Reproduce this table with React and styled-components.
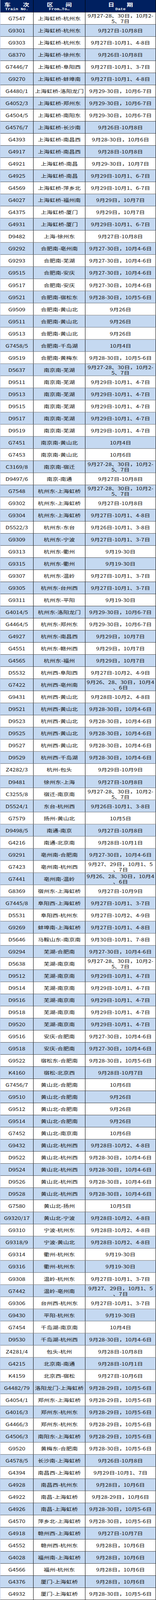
import { useEffect, useState } from "react";
import styled, { createGlobalStyle } from "styled-components";

const PAGE_HEIGHT = 5281;

const A = "9月27-28、30日，10月2-\n5、7日";
const B = "9月26、28、30日，10月4\n、6日";
const C = "9月27、29日，10月1、5\n、7日";

const trains = [
  ["G7547", "上海虹桥-杭州东", A],
  ["G9301", "上海虹桥-杭州东", "9月27日-10月8日"],
  ["G9303", "上海虹桥-杭州东", "9月27日-10月1、4-8日"],
  ["G8370", "上海虹桥-徐州东", "9月26日-10月8日"],
  ["G7446/7", "上海虹桥-阜阳西", "9月27日-10月1、3-7日"],
  ["G9270", "上海虹桥-蚌埠南", "9月27日-10月1、4-8日"],
  ["G4480/1", "上海虹桥-洛阳龙门", "9月29-30日，10月6-7日"],
  ["G4052/3", "上海虹桥-郑州东", "9月29-30日，10月6-7日"],
  ["G4504/5", "上海虹桥-南阳东", "9月29-30日，10月6-7日"],
  ["G4576/7", "上海虹桥-长沙南", "9月26日-10月8日"],
  ["G4393", "上海虹桥-南昌西", "9月28-30日，10月6日"],
  ["G4917", "上海虹桥-南昌西", "9月28日-10月8日"],
  ["G4921", "上海虹桥-南昌", "9月29-30日，10月7日"],
  ["G4925", "上海虹桥-南昌", "9月29日-10月1、6-7日"],
  ["G4569", "上海虹桥-萍乡北", "9月29日-10月1、6-7日"],
  ["G4027", "上海虹桥-福州南", "9月29日，10月7日"],
  ["G4375", "上海虹桥-厦门", "9月29日，10月7日"],
  ["G4931", "上海虹桥-厦门", "9月29日-10月1、6-7日"],
  ["D9482", "上海-徐州东", "9月27日-10月8日"],
  ["G9292", "合肥南-亳州南", "9月27-30日，10月4-6日"],
  ["G9293", "合肥南-芜湖", "9月27-30日，10月4-6日"],
  ["G9515", "合肥南-安庆", "9月27-30日，10月4-6日"],
  ["G9517", "合肥南-安庆", "9月27-30日，10月4-6日"],
  ["G9521", "合肥南-宿松东", "9月28-30日，10月5-6日"],
  ["G9509", "合肥南-黄山北", "9月26日"],
  ["G9511", "合肥南-黄山北", "9月26日"],
  ["G9513", "合肥南-黄山北", "9月26日"],
  ["G7458/5", "合肥南-千岛湖", "10月4日"],
  ["G9519", "合肥南-黄梅东", "9月28-30日，10月5-6日"],
  ["D5637", "南京南-芜湖", A],
  ["D9511", "南京南-芜湖", "9月29日-10月1、4-7日"],
  ["D9513", "南京南-芜湖", "9月29日-10月1、4-7日"],
  ["D9515", "南京南-芜湖", "9月29日-10月1、4-7日"],
  ["D9517", "南京南-芜湖", "9月29日-10月1、4-7日"],
  ["D9519", "南京南-芜湖", "9月29日-10月1、4-7日"],
  ["G7451", "南京南-黄山北", "10月4日"],
  ["G7453", "南京南-黄山北", "10月6日"],
  ["C3169/8", "南京南-宿迁", A],
  ["D9497/6", "南京-南通", "9月27日-10月8日"],
  ["G7548", "杭州东-上海虹桥", A],
  ["G9302", "杭州东-上海虹桥", "9月27日-10月8日"],
  ["G9304", "杭州东-上海虹桥", "9月27日-10月1、4-8日"],
  ["D5522/3", "杭州东-东台", "9月26日-10月1、3-8日"],
  ["G9309", "杭州东-宁波", "9月27日-10月1、3-7日"],
  ["G9313", "杭州东-衢州", "9月19-30日"],
  ["G9315", "杭州东-衢州", "9月19-30日"],
  ["G9307", "杭州东-温岭", "9月27日-10月1、3-7日"],
  ["G9305", "杭州东-台州西", "9月27日-10月1、3-7日"],
  ["G9311", "杭州东-平阳", "9月19-30日"],
  ["G4014/5", "杭州东-洛阳龙门", "9月29-30日，10月6-7日"],
  ["G4464/5", "杭州东-郑州东", "9月29-30日，10月6-7日"],
  ["G4927", "杭州东-南昌西", "9月29日，10月7日"],
  ["G4551", "杭州东-赣州西", "9月29日，10月7日"],
  ["G4565", "杭州东-福州", "9月29日，10月7日"],
  ["D5532", "杭州西-阜阳西", "9月27日-10月2、4-9日"],
  ["G7422", "杭州西-亳州南", B],
  ["G9431", "杭州西-黄山北", "9月28日-10月2、4-8日"],
  ["D9521", "杭州西-黄山北", "9月28-30日，10月4-6日"],
  ["D9523", "杭州西-黄山北", "9月28-30日，10月4-6日"],
  ["D9525", "杭州西-黄山北", "9月28-30日，10月4-6日"],
  ["D9527", "杭州西-黄山北", "9月28-30日，10月4-6日"],
  ["D9529", "杭州西-千岛湖", "9月28-30日，10月4-6日"],
  ["Z4282/3", "杭州-包头", "9月29日-10月9日"],
  ["D9481", "徐州东-上海", "9月27日-10月8日"],
  ["C3255/8", "宿迁-南京南", A],
  ["D5524/1", "东台-杭州西", "9月26日-10月1、3-8日"],
  ["G7579", "扬州-黄山北", "10月5日"],
  ["D9498/5", "南通-南京", "9月27日-10月8日"],
  ["G4216", "南通-北京南", "9月28日-10月1日"],
  ["G9291", "亳州南-合肥南", "9月27-30日，10月4-6日"],
  ["G7423", "亳州南-杭州西", C],
  ["G7441", "亳州南-温岭", B],
  ["G8369", "宿州东-上海虹桥", "9月27日-10月9日"],
  ["G7445/8", "阜阳西-上海虹桥", "9月27日-10月1、3-7日"],
  ["D5531", "阜阳西-杭州东", "9月27日-10月2、4-9日"],
  ["G9269", "蚌埠南-上海虹桥", "9月27日-10月1、4-8日"],
  ["D5646", "马鞍山东-南京南", "9月30日-10月1、7-8日"],
  ["G9294", "芜湖-合肥南", "9月27-30日，10月4-6日"],
  ["D5638", "芜湖-南京南", A],
  ["D9512", "芜湖-南京南", "9月29日-10月1、4-7日"],
  ["D9514", "芜湖-南京南", "9月29日-10月1、4-7日"],
  ["D9516", "芜湖-南京南", "9月29日-10月1、4-7日"],
  ["D9518", "芜湖-南京南", "9月29日-10月1、4-7日"],
  ["D9520", "芜湖-南京南", "9月29日-10月1、4-7日"],
  ["G9516", "安庆-合肥南", "9月27-30日，10月4-6日"],
  ["G9518", "安庆-合肥南", "9月27-30日，10月4-6日"],
  ["G9522", "宿松东-合肥南", "9月28-30日，10月5-6日"],
  ["K4160", "宿松-北京西", "9月28日-10月7日"],
  ["G7456/7", "黄山北-合肥南", "10月6日"],
  ["G9510", "黄山北-合肥南", "9月26日"],
  ["G9512", "黄山北-合肥南", "9月26日"],
  ["G9514", "黄山北-合肥南", "9月26日"],
  ["G7452", "黄山北-南京南", "10月6日"],
  ["G9432", "黄山北-杭州西", "9月28日-10月2、4-8日"],
  ["D9522", "黄山北-杭州西", "9月28-30日，10月4-6日"],
  ["D9524", "黄山北-杭州西", "9月28-30日，10月4-6日"],
  ["D9526", "黄山北-杭州西", "9月28-30日，10月4-6日"],
  ["D9528", "黄山北-杭州西", "9月28-30日，10月4-6日"],
  ["G7580", "黄山北-扬州", "10月5日"],
  ["G9320/17", "黄山北-宁波", "9月28日-10月2、4-8日"],
  ["G9310", "宁波-杭州东", "9月28日-10月2、4-8日"],
  ["G9318/9", "宁波-黄山北", "9月28日-10月2、4-8日"],
  ["G9314", "衢州-杭州东", "9月19-30日"],
  ["G9316", "衢州-杭州东", "9月19-30日"],
  ["G9308", "温岭-杭州东", "9月27日-10月1、3-7日"],
  ["G7442", "温岭-亳州南", C],
  ["G9306", "台州西-杭州东", "9月27日-10月1、3-7日"],
  ["G9430", "平阳-杭州东", "9月19-30日"],
  ["G7454", "千岛湖-南京南", "10月4日"],
  ["D9530", "千岛湖-杭州西", "9月28-30日，10月4-6日"],
  ["Z4281/4", "包头-杭州", "9月28日-10月8日"],
  ["G4215", "北京南-南通", "9月28日-10月1日"],
  ["K4159", "北京西-宿松", "9月27日-10月6日"],
  ["G4482/79", "洛阳龙门-上海虹桥", "9月28-29日，10月5-6日"],
  ["G4054/1", "郑州东-上海虹桥", "9月28-29日，10月5-6日"],
  ["G4016/3", "郑州东-杭州东", "9月28-29日，10月5-6日"],
  ["G4466/3", "郑州东-杭州东", "9月28-29日，10月5-6日"],
  ["G4506/3", "南阳东-上海虹桥", "9月28-29日，10月5-6日"],
  ["G9520", "黄梅东-合肥南", "9月28-30日，10月5-6日"],
  ["G4578/5", "长沙南-上海虹桥", "9月26日-10月8日"],
  ["G4394", "南昌西-上海虹桥", "9月29日-10月1、7日"],
  ["G4928", "南昌西-杭州东", "9月28日，10月6日"],
  ["G4922", "南昌-上海虹桥", "9月28-29日，10月6日"],
  ["G4926", "南昌-上海虹桥", "9月28-30日，10月5-6日"],
  ["G4570", "萍乡北-上海虹桥", "9月28-30日，10月5-6日"],
  ["G4918", "赣州西-上海虹桥", "9月27日-10月7日"],
  ["G4552", "赣州西-杭州东", "9月28日，10月6日"],
  ["G4028", "福州南-上海虹桥", "9月28日，10月6日"],
  ["G4566", "福州-杭州东", "9月28日，10月6日"],
  ["G4376", "厦门-上海虹桥", "9月28日，10月6日"],
  ["G4932", "厦门-上海虹桥", "9月28-30日，10月5-6日"],
];

const GlobalStyle = createGlobalStyle`
  body {
    margin: 0;
    background: #ffffff;
    font-family: "Noto Sans CJK SC", "Liberation Sans", sans-serif;
  }
`;

const Frame = styled.div`
  width: 400px;
  overflow: hidden;
`;

const Table = styled.div`
  width: 400px;
  border-left: 1px solid #b4c6e7;
  box-sizing: border-box;
  transform-origin: top left;
`;

const HeaderRow = styled.div`
  display: grid;
  grid-template-columns: 85px 133px 181px;
  height: 41px;
  background: #002060;
  border-bottom: 1px solid #000000;
  box-sizing: border-box;
`;

const HeaderCell = styled.div`
  display: flex;
  flex-direction: column;
  align-items: center;
  justify-content: center;
  padding-top: 4px;
  border-right: 1px solid #000000;
  box-sizing: border-box;
  color: #ffffff;
`;

const ZhTitle = styled.div`
  font-size: 16px;
  line-height: 17px;
  font-weight: 700;
  white-space: pre;
`;

const EnTitle = styled.div`
  font-family: "Liberation Mono", "DejaVu Sans Mono", monospace;
  font-size: 11px;
  line-height: 13px;
  font-weight: 700;
  white-space: pre;
`;

const Row = styled.div`
  display: grid;
  grid-template-columns: 85px 133px 181px;
  height: 40px;
  background: ${(p) => (p.$alt ? "#c5d9f1" : "#ffffff")};
  border-bottom: 1px solid #000000;
  box-sizing: border-box;
`;

const Cell = styled.div`
  display: flex;
  align-items: center;
  justify-content: center;
  text-align: center;
  padding: 0 2px;
  border-right: 1px solid #000000;
  box-sizing: border-box;
  color: #111111;
  font-size: 15px;
  line-height: 18px;
  white-space: pre-line;
  overflow: hidden;
`;

// the browser window can be shorter than the page; squeeze the table so it fits
const fitScale = () =>
  typeof window === "undefined" ? 1 : Math.min(1, window.innerHeight / PAGE_HEIGHT);

export default function App() {
  const [scale, setScale] = useState(fitScale);

  useEffect(() => {
    const onResize = () => setScale(fitScale());
    window.addEventListener("resize", onResize);
    return () => window.removeEventListener("resize", onResize);
  }, []);

  const squeezed = scale < 1;

  return (
    <>
      <GlobalStyle />
      <Frame style={squeezed ? { height: Math.floor(PAGE_HEIGHT * scale) } : undefined}>
        <Table style={squeezed ? { transform: `scaleY(${scale})` } : undefined}>
          <HeaderRow>
            <HeaderCell>
              <ZhTitle>车　　次</ZhTitle>
              <EnTitle>Train No.</EnTitle>
            </HeaderCell>
            <HeaderCell>
              <ZhTitle>区　　间</ZhTitle>
              <EnTitle>From…To…</EnTitle>
            </HeaderCell>
            <HeaderCell>
              <ZhTitle>日　　期</ZhTitle>
              <EnTitle>Date</EnTitle>
            </HeaderCell>
          </HeaderRow>
          {trains.map(([no, route, date], i) => (
            <Row key={no + i} $alt={i % 2 === 1}>
              <Cell>{no}</Cell>
              <Cell>{route}</Cell>
              <Cell>{date}</Cell>
            </Row>
          ))}
        </Table>
      </Frame>
    </>
  );
}
